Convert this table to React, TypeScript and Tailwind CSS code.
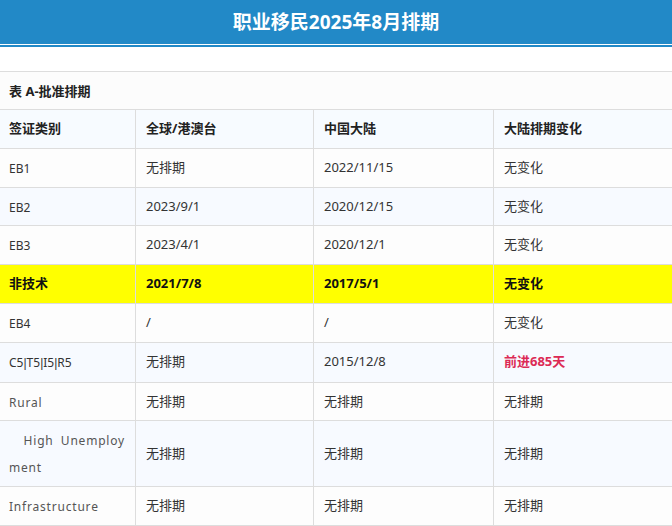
import React from "react";

type Row = {
  type: React.ReactNode;
  key: string;
  global: string;
  china: string;
  change: string;
  highlight?: boolean;
  red?: boolean;
  gray?: boolean;
  tall?: boolean;
};

const Pipe = () => <span style={{ fontFamily: '"Liberation Sans", sans-serif' }}>|</span>;

const rows: Row[] = [
  { key: "eb1", type: "EB1", global: "无排期", china: "2022/11/15", change: "无变化" },
  { key: "eb2", type: "EB2", global: "2023/9/1", china: "2020/12/15", change: "无变化" },
  { key: "eb3", type: "EB3", global: "2023/4/1", china: "2020/12/1", change: "无变化" },
  { key: "other", type: "非技术", global: "2021/7/8", china: "2017/5/1", change: "无变化", highlight: true },
  { key: "eb4", type: "EB4", global: "/", china: "/", change: "无变化" },
  {
    key: "c5",
    type: (
      <>
        C5<Pipe />T5<Pipe />I5<Pipe />R5
      </>
    ),
    global: "无排期",
    china: "2015/12/8",
    change: "前进685天",
    red: true,
  },
  { key: "rural", type: "Rural", global: "无排期", china: "无排期", change: "无排期", gray: true },
  { key: "high", type: "\u00a0\u00a0High Unemployment", global: "无排期", china: "无排期", change: "无排期", gray: true, tall: true },
  { key: "infra", type: "Infrastructure", global: "无排期", china: "无排期", change: "无排期", gray: true },
];

const cell = "border border-[#dddddd] py-[6px] px-[10px] align-middle leading-[25.8px]";

export default function App() {
  return (
    <div
      className="w-[672px] h-[526px] overflow-hidden bg-white text-[13px] text-[#333]"
      style={{ fontFamily: '"Noto Sans", "Noto Sans CJK SC", sans-serif' }}
    >
      {/* Title bar */}
      <div className="h-[44px] bg-[#2289c7] flex items-center justify-center">
        <h1 className="text-white font-bold text-[19px] leading-none">职业移民2025年8月排期</h1>
      </div>
      <div className="h-px bg-white" />
      <div className="h-[2px] bg-[#2289c7]" />
      <div className="h-[24px]" />

      <table className="table-fixed border-collapse w-[676px] -ml-[2px]">
        <colgroup>
          <col className="w-[137px]" />
          <col className="w-[178px]" />
          <col className="w-[180px]" />
          <col />
        </colgroup>
        <tbody>
          <tr className="bg-[#fcfcfc]">
            <td colSpan={4} className="border border-[#dddddd] py-[5.5px] px-[10px] leading-[26px] font-bold text-[#222]">
              表 A-批准排期
            </td>
          </tr>
          <tr className="bg-[#f7fbff] font-bold text-[#222]">
            <td className={cell}>签证类别</td>
            <td className={cell}>全球/港澳台</td>
            <td className={cell}>中国大陆</td>
            <td className={cell}>大陆排期变化</td>
          </tr>
          {rows.map((r, i) => {
            const bg = r.highlight ? "bg-[#ffff00] font-bold text-[#111]" : i % 2 === 0 ? "bg-[#fdfdfd]" : "bg-[#f7faff]";
            return (
              <tr key={r.key} className={bg}>
                <td
                  className={`${cell} ${r.highlight ? "" : "text-[12px] pt-[7px] pb-[5px]"} ${
                    r.gray ? "text-[#555] tracking-[0.8px]" : ""
                  } ${r.tall ? "break-all text-justify leading-[26.5px]" : ""}`}
                >
                  {r.type}
                </td>
                <td className={cell}>{r.global}</td>
                <td className={cell}>{r.china}</td>
                <td className={`${cell} ${r.red ? "text-[#dc2a55] font-bold" : ""}`}>{r.change}</td>
              </tr>
            );
          })}
        </tbody>
      </table>
    </div>
  );
}
